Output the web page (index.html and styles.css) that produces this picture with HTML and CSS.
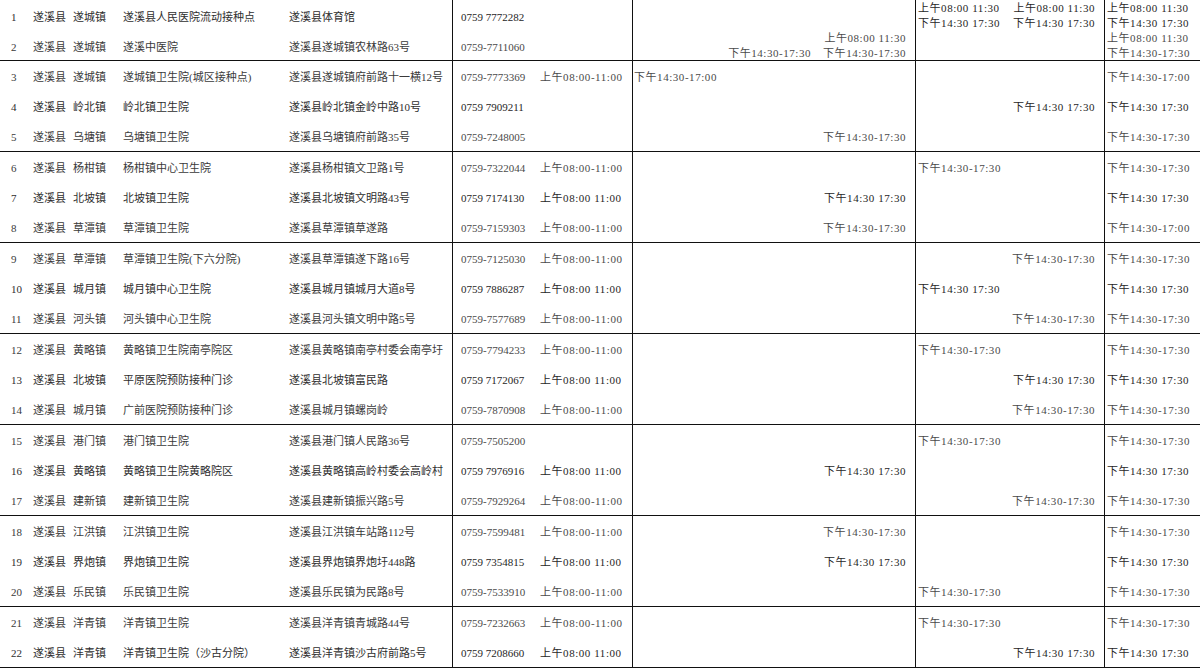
FILE: index.html
```html
<!DOCTYPE html>
<html lang="zh-CN">
<head>
<meta charset="utf-8">
<title>遂溪县接种点</title>
<link rel="stylesheet" href="styles.css">
</head>
<body>
<div class="sheet">
  <div class="group">
    <div class="row d">
      <div class="c1"><span>1</span><span>遂溪县</span><span>遂城镇</span><span>遂溪县人民医院流动接种点</span><span>遂溪县体育馆</span></div>
      <div class="c2"><span class="tel">0759 7772282</span></div>
      <div class="c3"></div>
      <div class="c4 stack"><div class="ln sb"><span>上午08:00 11:30</span><span>上午08:00 11:30</span></div><div class="ln sb"><span>下午14:30 17:30</span><span>下午14:30 17:30</span></div></div>
      <div class="c5 stack"><div class="ln">上午08:00 11:30</div><div class="ln">下午14:30 17:30</div></div>
    </div>
    <div class="row">
      <div class="c1"><span>2</span><span>遂溪县</span><span>遂城镇</span><span>遂溪中医院</span><span>遂溪县遂城镇农林路63号</span></div>
      <div class="c2"><span class="tel">0759-7711060</span></div>
      <div class="c3 stack"><div class="ln r"><span>上午08:00 11:30</span></div><div class="ln r"><span>下午14:30-17:30</span><span>下午14:30-17:30</span></div></div>
      <div class="c4"></div>
      <div class="c5 stack"><div class="ln">上午08:00 11:30</div><div class="ln">下午14:30-17:30</div></div>
    </div>
  </div>
  <div class="group">
    <div class="row">
      <div class="c1"><span>3</span><span>遂溪县</span><span>遂城镇</span><span>遂城镇卫生院(城区接种点)</span><span>遂溪县遂城镇府前路十一横12号</span></div>
      <div class="c2"><span class="tel">0759-7773369</span><span class="am">上午08:00-11:00</span></div>
      <div class="c3">下午14:30-17:00</div>
      <div class="c4"></div>
      <div class="c5">下午14:30-17:00</div>
    </div>
    <div class="row d">
      <div class="c1"><span>4</span><span>遂溪县</span><span>岭北镇</span><span>岭北镇卫生院</span><span>遂溪县岭北镇金岭中路10号</span></div>
      <div class="c2"><span class="tel">0759 7909211</span></div>
      <div class="c3"></div>
      <div class="c4 r">下午14:30 17:30</div>
      <div class="c5">下午14:30 17:30</div>
    </div>
    <div class="row">
      <div class="c1"><span>5</span><span>遂溪县</span><span>乌塘镇</span><span>乌塘镇卫生院</span><span>遂溪县乌塘镇府前路35号</span></div>
      <div class="c2"><span class="tel">0759-7248005</span></div>
      <div class="c3 r">下午14:30-17:30</div>
      <div class="c4"></div>
      <div class="c5">下午14:30-17:30</div>
    </div>
  </div>
  <div class="group">
    <div class="row">
      <div class="c1"><span>6</span><span>遂溪县</span><span>杨柑镇</span><span>杨柑镇中心卫生院</span><span>遂溪县杨柑镇文卫路1号</span></div>
      <div class="c2"><span class="tel">0759-7322044</span><span class="am">上午08:00-11:00</span></div>
      <div class="c3"></div>
      <div class="c4">下午14:30-17:30</div>
      <div class="c5">下午14:30-17:30</div>
    </div>
    <div class="row d">
      <div class="c1"><span>7</span><span>遂溪县</span><span>北坡镇</span><span>北坡镇卫生院</span><span>遂溪县北坡镇文明路43号</span></div>
      <div class="c2"><span class="tel">0759 7174130</span><span class="am">上午08:00 11:00</span></div>
      <div class="c3 r">下午14:30 17:30</div>
      <div class="c4"></div>
      <div class="c5">下午14:30 17:30</div>
    </div>
    <div class="row">
      <div class="c1"><span>8</span><span>遂溪县</span><span>草潭镇</span><span>草潭镇卫生院</span><span>遂溪县草潭镇草遂路</span></div>
      <div class="c2"><span class="tel">0759-7159303</span><span class="am">上午08:00-11:00</span></div>
      <div class="c3 r">下午14:30-17:30</div>
      <div class="c4"></div>
      <div class="c5">下午14:30-17:00</div>
    </div>
  </div>
  <div class="group">
    <div class="row">
      <div class="c1"><span>9</span><span>遂溪县</span><span>草潭镇</span><span>草潭镇卫生院(下六分院)</span><span>遂溪县草潭镇遂下路16号</span></div>
      <div class="c2"><span class="tel">0759-7125030</span><span class="am">上午08:00-11:00</span></div>
      <div class="c3"></div>
      <div class="c4 r">下午14:30-17:30</div>
      <div class="c5">下午14:30-17:30</div>
    </div>
    <div class="row d">
      <div class="c1"><span>10</span><span>遂溪县</span><span>城月镇</span><span>城月镇中心卫生院</span><span>遂溪县城月镇城月大道8号</span></div>
      <div class="c2"><span class="tel">0759 7886287</span><span class="am">上午08:00 11:00</span></div>
      <div class="c3"></div>
      <div class="c4">下午14:30 17:30</div>
      <div class="c5">下午14:30 17:30</div>
    </div>
    <div class="row">
      <div class="c1"><span>11</span><span>遂溪县</span><span>河头镇</span><span>河头镇中心卫生院</span><span>遂溪县河头镇文明中路5号</span></div>
      <div class="c2"><span class="tel">0759-7577689</span><span class="am">上午08:00-11:00</span></div>
      <div class="c3"></div>
      <div class="c4 r">下午14:30-17:30</div>
      <div class="c5">下午14:30-17:30</div>
    </div>
  </div>
  <div class="group">
    <div class="row">
      <div class="c1"><span>12</span><span>遂溪县</span><span>黄略镇</span><span>黄略镇卫生院南亭院区</span><span>遂溪县黄略镇南亭村委会南亭圩</span></div>
      <div class="c2"><span class="tel">0759-7794233</span><span class="am">上午08:00-11:00</span></div>
      <div class="c3"></div>
      <div class="c4">下午14:30-17:30</div>
      <div class="c5">下午14:30-17:30</div>
    </div>
    <div class="row d">
      <div class="c1"><span>13</span><span>遂溪县</span><span>北坡镇</span><span>平原医院预防接种门诊</span><span>遂溪县北坡镇富民路</span></div>
      <div class="c2"><span class="tel">0759 7172067</span><span class="am">上午08:00 11:00</span></div>
      <div class="c3"></div>
      <div class="c4 r">下午14:30 17:30</div>
      <div class="c5">下午14:30 17:30</div>
    </div>
    <div class="row">
      <div class="c1"><span>14</span><span>遂溪县</span><span>城月镇</span><span>广前医院预防接种门诊</span><span>遂溪县城月镇螺岗岭</span></div>
      <div class="c2"><span class="tel">0759-7870908</span><span class="am">上午08:00-11:00</span></div>
      <div class="c3"></div>
      <div class="c4 r">下午14:30-17:30</div>
      <div class="c5">下午14:30-17:30</div>
    </div>
  </div>
  <div class="group">
    <div class="row">
      <div class="c1"><span>15</span><span>遂溪县</span><span>港门镇</span><span>港门镇卫生院</span><span>遂溪县港门镇人民路36号</span></div>
      <div class="c2"><span class="tel">0759-7505200</span></div>
      <div class="c3"></div>
      <div class="c4">下午14:30-17:30</div>
      <div class="c5">下午14:30-17:30</div>
    </div>
    <div class="row d">
      <div class="c1"><span>16</span><span>遂溪县</span><span>黄略镇</span><span>黄略镇卫生院黄略院区</span><span>遂溪县黄略镇高岭村委会高岭村</span></div>
      <div class="c2"><span class="tel">0759 7976916</span><span class="am">上午08:00 11:00</span></div>
      <div class="c3 r">下午14:30 17:30</div>
      <div class="c4"></div>
      <div class="c5">下午14:30 17:30</div>
    </div>
    <div class="row">
      <div class="c1"><span>17</span><span>遂溪县</span><span>建新镇</span><span>建新镇卫生院</span><span>遂溪县建新镇振兴路5号</span></div>
      <div class="c2"><span class="tel">0759-7929264</span><span class="am">上午08:00-11:00</span></div>
      <div class="c3"></div>
      <div class="c4 r">下午14:30-17:30</div>
      <div class="c5">下午14:30-17:30</div>
    </div>
  </div>
  <div class="group">
    <div class="row">
      <div class="c1"><span>18</span><span>遂溪县</span><span>江洪镇</span><span>江洪镇卫生院</span><span>遂溪县江洪镇车站路112号</span></div>
      <div class="c2"><span class="tel">0759-7599481</span><span class="am">上午08:00-11:00</span></div>
      <div class="c3 r">下午14:30-17:30</div>
      <div class="c4"></div>
      <div class="c5">下午14:30-17:30</div>
    </div>
    <div class="row d">
      <div class="c1"><span>19</span><span>遂溪县</span><span>界炮镇</span><span>界炮镇卫生院</span><span>遂溪县界炮镇界炮圩448路</span></div>
      <div class="c2"><span class="tel">0759 7354815</span><span class="am">上午08:00 11:00</span></div>
      <div class="c3 r">下午14:30 17:30</div>
      <div class="c4"></div>
      <div class="c5">下午14:30 17:30</div>
    </div>
    <div class="row">
      <div class="c1"><span>20</span><span>遂溪县</span><span>乐民镇</span><span>乐民镇卫生院</span><span>遂溪县乐民镇为民路8号</span></div>
      <div class="c2"><span class="tel">0759-7533910</span><span class="am">上午08:00-11:00</span></div>
      <div class="c3"></div>
      <div class="c4">下午14:30-17:30</div>
      <div class="c5">下午14:30-17:30</div>
    </div>
  </div>
  <div class="group">
    <div class="row">
      <div class="c1"><span>21</span><span>遂溪县</span><span>洋青镇</span><span>洋青镇卫生院</span><span>遂溪县洋青镇青城路44号</span></div>
      <div class="c2"><span class="tel">0759-7232663</span><span class="am">上午08:00-11:00</span></div>
      <div class="c3"></div>
      <div class="c4">下午14:30-17:30</div>
      <div class="c5">下午14:30-17:30</div>
    </div>
    <div class="row d">
      <div class="c1"><span>22</span><span>遂溪县</span><span>洋青镇</span><span>洋青镇卫生院（沙古分院）</span><span>遂溪县洋青镇沙古府前路5号</span></div>
      <div class="c2"><span class="tel">0759 7208660</span><span class="am">上午08:00 11:00</span></div>
      <div class="c3"></div>
      <div class="c4 r">下午14:30 17:30</div>
      <div class="c5">下午14:30 17:30</div>
    </div>
  </div>
</div>
</body>
</html>
```
FILE: styles.css
```css
* {
  box-sizing: border-box;
}

html, body {
  margin: 0;
  padding: 0;
  background: #ffffff;
}

body {
  width: 1200px;
  height: 668px;
  overflow: hidden;
  font-family: "Liberation Serif", "Noto Sans CJK SC", serif;
  font-size: 11px;
  line-height: 1;
  color: #4a4a4a;
}

.sheet {
  width: 1200px;
}

.group {
  border-bottom: 1px solid #111;
}

.row {
  display: grid;
  grid-template-columns: 452px 180px 283px 189px 96px;
  height: 30px;
}

.row.d {
  color: #262626;
}

.c1 {
  display: grid;
  grid-template-columns: 22px 40px 50px 166px auto;
  align-items: center;
  padding-left: 11px;
  padding-top: 3px;
  white-space: nowrap;
  color: #3a3a3a;
}

.row.d .c1 {
  color: #2e2e2e;
}

.c2, .c3, .c4, .c5 {
  display: flex;
  align-items: center;
  white-space: nowrap;
  border-left: 1px solid #111;
  padding-top: 3px;
}

.c3, .c4, .c5, .am {
  letter-spacing: 0.55px;
}

.c2 {
  padding-left: 8px;
}

.tel {
  width: 79px;
}

.c3 {
  padding-left: 1px;
  padding-right: 9px;
}

.c4 {
  padding-left: 2px;
  padding-right: 9px;
}

.c5 {
  padding-left: 2px;
}

.r {
  justify-content: flex-end;
}

.stack {
  flex-direction: column;
  align-items: stretch;
  justify-content: center;
  padding-top: 1px;
}

.ln {
  display: flex;
  align-items: center;
  height: 15px;
  gap: 12px;
}

.ln.sb {
  justify-content: space-between;
}

.ln.r {
  justify-content: flex-end;
}
```
